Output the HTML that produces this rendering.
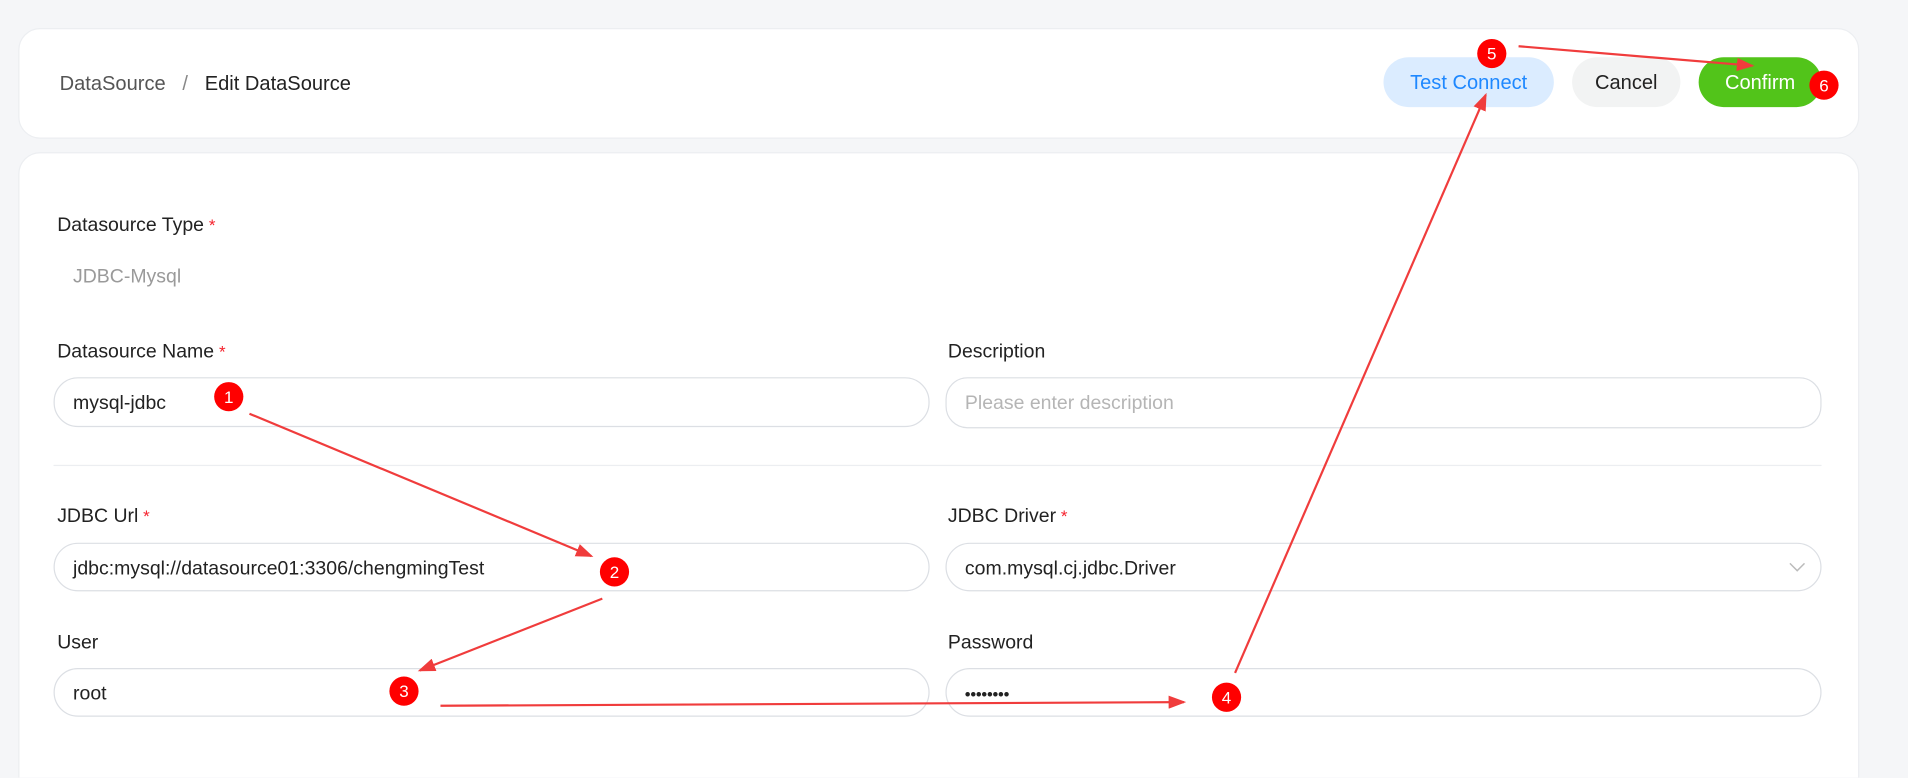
<!DOCTYPE html>
<html><head><meta charset="utf-8"><style>
html,body{margin:0;padding:0;width:1908px;height:778px;overflow:hidden;background:#f5f6f8}
#w{position:absolute;left:0;top:0;width:1568px;height:639px;overflow:hidden;transform:scale(1.2168);transform-origin:0 0;font-family:"Liberation Sans",sans-serif;color:#222;font-size:16px}
.card{position:absolute;background:#fff;border:1px solid #eceef1;border-radius:18px}
.abs{position:absolute;white-space:nowrap}
.btn{position:absolute;top:47px;height:41px;border-radius:21px;line-height:43px;text-align:center;font-size:16.5px}
.inp{position:absolute;height:40px;border:1px solid #dcdfe4;border-radius:20px;box-sizing:border-box;line-height:42px;padding-left:15px;font-size:16px;color:#222}
.lbl{position:absolute;font-size:16px;color:#222}
.req{color:#f5222d;font-size:14px;vertical-align:top;margin-left:4px}
</style></head><body><div id="w">
<div class="card" style="left:15px;top:23px;width:1511px;height:89px"></div>
<div class="abs" style="left:49px;top:60px;font-size:16.5px;color:#555">DataSource&nbsp;&nbsp;&nbsp;<span style="color:#888">/</span>&nbsp;&nbsp;&nbsp;<span style="color:#222">Edit DataSource</span></div>
<div class="btn" style="left:1137px;width:140px;background:#dbecff;color:#1e88ff">Test Connect</div>
<div class="btn" style="left:1292px;width:89px;background:#f2f3f3;color:#222">Cancel</div>
<div class="btn" style="left:1396px;width:101px;background:#52c41a;color:#fff">Confirm</div>

<div class="card" style="left:15px;top:125px;width:1511px;height:540px"></div>
<div class="lbl" style="left:47px;top:177px">Datasource Type<span class="req">*</span></div>
<div class="abs" style="left:60px;top:219px;color:#9a9a9a">JDBC-Mysql</div>
<div class="lbl" style="left:47px;top:281px">Datasource Name<span class="req">*</span></div>
<div class="lbl" style="left:779px;top:281px">Description</div>
<div class="inp" style="left:44px;top:310px;width:720px;height:41px">mysql-jdbc</div>
<div class="inp" style="left:777px;top:310px;width:720px;height:42px;color:#b5b5b5;border-radius:18px">Please enter description</div>
<div class="abs" style="left:44px;top:382px;width:1453px;height:1px;background:#eceef1"></div>
<div class="lbl" style="left:47px;top:416px">JDBC Url<span class="req">*</span></div>
<div class="lbl" style="left:779px;top:416px">JDBC Driver<span class="req">*</span></div>
<div class="inp" style="left:44px;top:446px;width:720px">jdbc:mysql://datasource01:3306/chengmingTest</div>
<div class="inp" style="left:777px;top:446px;width:720px">com.mysql.cj.jdbc.Driver<svg style="position:absolute;right:12px;top:15px" width="14" height="9" viewBox="0 0 14 9"><path d="M1 1l6 6 6-6" fill="none" stroke="#bbb" stroke-width="1.2"/></svg></div>
<div class="lbl" style="left:47px;top:520px">User</div>
<div class="lbl" style="left:779px;top:520px">Password</div>
<div class="inp" style="left:44px;top:549px;width:720px">root</div>
<div class="inp" style="left:777px;top:549px;width:720px;font-weight:bold;font-size:13px">••••••••</div>

<svg class="abs" style="left:0;top:0" width="1568" height="639" viewBox="0 0 1568 639">
<defs><marker id="a" markerWidth="8" markerHeight="6" refX="7" refY="3" orient="auto"><path d="M0 0L8 3L0 6z" fill="#f03c3c"/></marker></defs>
<g stroke="#f03c3c" stroke-width="1.8" fill="none" marker-end="url(#a)">
<line x1="205" y1="340" x2="486" y2="457"/>
<line x1="495" y1="492" x2="345" y2="551"/>
<line x1="362" y1="580" x2="973" y2="577"/>
<line x1="1015" y1="553" x2="1221" y2="78"/>
<line x1="1248" y1="38" x2="1440" y2="54"/>
</g>
<g font-family="Liberation Sans,sans-serif" font-size="14" fill="#fff" text-anchor="middle">
<circle cx="188" cy="326" r="12" fill="#f00"/><text x="188" y="331">1</text>
<circle cx="505" cy="470" r="12" fill="#f00"/><text x="505" y="475">2</text>
<circle cx="332" cy="568" r="12" fill="#f00"/><text x="332" y="573">3</text>
<circle cx="1008" cy="573" r="12" fill="#f00"/><text x="1008" y="578">4</text>
<circle cx="1226" cy="44" r="12" fill="#f00"/><text x="1226" y="49">5</text>
<circle cx="1499" cy="70" r="12" fill="#f00"/><text x="1499" y="75">6</text>
</g></svg>
</div></body></html>
